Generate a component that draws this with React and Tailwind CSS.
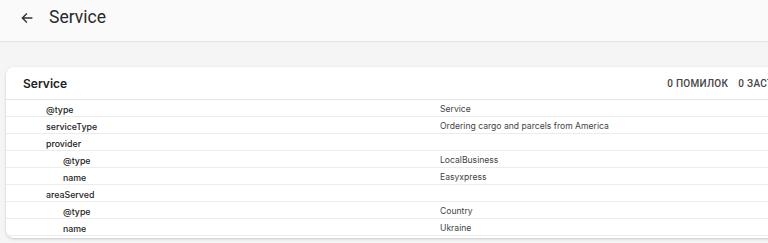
import React from 'react';

const rows = [
  { key: '@type', value: 'Service', depth: 1 },
  { key: 'serviceType', value: 'Ordering cargo and parcels from America', depth: 1 },
  { key: 'provider', value: '', depth: 1 },
  { key: '@type', value: 'LocalBusiness', depth: 2 },
  { key: 'name', value: 'Easyxpress', depth: 2 },
  { key: 'areaServed', value: '', depth: 1 },
  { key: '@type', value: 'Country', depth: 2 },
  { key: 'name', value: 'Ukraine', depth: 2 },
];

const App = () => {
  return (
    <div className="min-h-[243px] bg-[#f5f5f5] overflow-hidden" style={{ fontFamily: 'Roboto, sans-serif' }}>
      {/* Top bar */}
      <div className="h-[42px] bg-[#fafafa] border-b border-[#e3e3e3] flex items-center pb-[6px]">
        <svg className="ml-[20px] w-[14px] h-[14px]" viewBox="0 0 24 24" fill="none" stroke="#333" strokeWidth="2.4" strokeLinecap="square">
          <path d="M20 12H5M11 5l-7 7 7 7" />
        </svg>
        <span className="ml-[15px] text-[17.5px] text-[#2a2a2a] leading-none">Service</span>
      </div>

      {/* Card */}
      <div className="mt-[25px] ml-[6px] w-[800px] bg-white rounded-[8px] shadow-[0_1px_3px_rgba(0,0,0,0.18)]" style={{ fontFamily: 'Inter, sans-serif' }}>
        <div className="h-[33px] flex items-center border-b border-[#e6e6e6] pt-[1px]">
          <span className="ml-[17px] text-[12px] font-semibold text-[#222]">Service</span>
          <div className="ml-[600px] flex gap-[10px] text-[10px] font-medium tracking-[0.3px] text-[#444] whitespace-nowrap" style={{ fontFamily: 'Roboto, sans-serif' }}>
            <span>0 ПОМИЛОК</span>
            <span>0 ЗАСТЕРЕЖЕНЬ</span>
          </div>
        </div>
        {rows.map((r, i) => (
          <div key={i} className="h-[17px] flex items-center pt-[3px] border-b border-[#ececec] last:border-b-0">
            <div className={`w-[434px] text-[8.8px] font-medium text-[#222] ${r.depth === 2 ? 'pl-[57px]' : 'pl-[40px]'}`}>
              {r.key}
            </div>
            <div className="text-[8.6px] text-[#444]">{r.value}</div>
          </div>
        ))}
        <div className="h-[2px]" />
      </div>
    </div>
  );
};

export default App;
